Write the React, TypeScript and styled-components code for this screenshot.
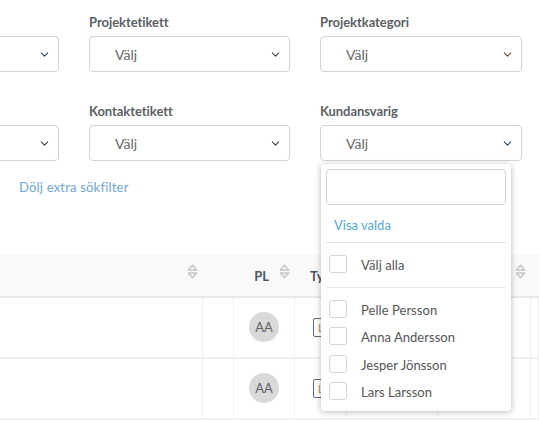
import React from 'react';
import styled, { createGlobalStyle } from 'styled-components';
import { LuChevronDown } from 'react-icons/lu';

const GlobalStyle = createGlobalStyle`
    html, body {
        margin: 0;
        padding: 0;
        background: #fff;
    }
    * {
        box-sizing: border-box;
    }
`;

const people = ['Pelle Persson', 'Anna Andersson', 'Jesper Jönsson', 'Lars Larsson'];

const filterRows = [
    [
        { label: '', chevron: '#1f3f66', hidden: true },
        { label: 'Projektetikett', chevron: '#3a3a3a' },
        { label: 'Projektkategori', chevron: '#5a4030' }
    ],
    [
        { label: '', chevron: '#3a3a3a', hidden: true },
        { label: 'Kontaktetikett', chevron: '#3a3a3a' },
        { label: 'Kundansvarig', chevron: '#1f3f66', open: true }
    ]
];

const SortIcon: React.FC = () => (
    <SortSvg width="11" height="15" viewBox="0 0 11 15">
        <path d="M5.5 1.2 L9.6 6 H1.4 Z" fill="none" stroke="#c6c6c6" strokeWidth="1.4" strokeLinejoin="round" />
        <path d="M5.5 13.8 L9.6 9 H1.4 Z" fill="none" stroke="#c6c6c6" strokeWidth="1.4" strokeLinejoin="round" />
    </SortSvg>
);

const App: React.FC = () => {
    return (
        <Page>
            <GlobalStyle />
            <FilterGrid>
                {filterRows.flat().map((field, i) => (
                    <Field key={i}>
                        <FieldLabel>{field.label}</FieldLabel>
                        <SelectBox>
                            {!field.hidden && <SelectText>Välj</SelectText>}
                            <Chevron size={13} color={field.chevron} strokeWidth={1.9} />
                        </SelectBox>
                        {field.open && (
                            <Dropdown>
                                <SearchInput />
                                <ShowSelected>Visa valda</ShowSelected>
                                <SelectAllRow>
                                    <CheckBox />
                                    <OptionText>Välj alla</OptionText>
                                </SelectAllRow>
                                <OptionList>
                                    {people.map((name) => (
                                        <OptionRow key={name}>
                                            <CheckBox />
                                            <OptionText>{name}</OptionText>
                                        </OptionRow>
                                    ))}
                                </OptionList>
                            </Dropdown>
                        )}
                    </Field>
                ))}
            </FilterGrid>

            <ToggleLink>Dölj extra sökfilter</ToggleLink>

            <TableHead>
                <HeadCell>
                    <SortIcon />
                </HeadCell>
                <HeadCell />
                <HeadCell>
                    <HeadText>PL</HeadText>
                    <SortIcon />
                </HeadCell>
                <HeadCell $start>
                    <HeadText>Typ</HeadText>
                </HeadCell>
                <HeadCell />
                <HeadCell>
                    <SortIcon />
                </HeadCell>
                <HeadCell />
            </TableHead>

            {[0, 1].map((row) => (
                <TableRow key={row}>
                    <Cell />
                    <Cell />
                    <Cell>
                        <Avatar>AA</Avatar>
                    </Cell>
                    <TypeCell>
                        <TypeTag>L</TypeTag>
                    </TypeCell>
                    <Cell />
                    <Cell>
                        {/* mostly covered by the open dropdown, only the edge shows */}
                        <RowAction />
                    </Cell>
                    <Cell />
                </TableRow>
            ))}
        </Page>
    );
};

const Page = styled.div`
    position: relative;
    width: 539px;
    height: 422px;
    overflow: hidden;
    background: #fff;
    font-family: 'Lato', 'Liberation Sans', sans-serif;
    color: #555;
`;

const FilterGrid = styled.div`
    display: grid;
    grid-template-columns: 201px 201px 202px;
    column-gap: 30px;
    row-gap: 32px;
    margin-left: -142px;
    padding-top: 15px;
`;

const Field = styled.div`
    position: relative;
`;

const FieldLabel = styled.div`
    height: 21px;
    font-size: 13px;
    line-height: 15px;
    font-weight: 700;
    letter-spacing: -0.05px;
    color: #5a5f66;
`;

const SelectBox = styled.div`
    display: flex;
    align-items: center;
    height: 36px;
    padding: 0 7px 0 25px;
    border: 1px solid #cfd4dc;
    border-radius: 4px;
    background: #fff;
`;

const Chevron = styled(LuChevronDown)`
    margin-left: auto;
`;

const SelectText = styled.span`
    font-size: 14px;
    color: #666;
`;

const Dropdown = styled.div`
    position: absolute;
    top: 60px;
    left: 1px;
    width: 190px;
    height: 247px;
    padding: 5px 5px 0;
    background: #fff;
    border-radius: 3px;
    box-shadow: 0 1px 6px rgba(0, 0, 0, 0.28);
    z-index: 2;
`;

const SearchInput = styled.div`
    width: 180px;
    height: 36px;
    border: 1px solid #cfd4dc;
    border-radius: 4px;
`;

const ShowSelected = styled.div`
    height: 38px;
    padding: 13px 0 0 8px;
    font-size: 13px;
    line-height: 15px;
    color: #52a8e0;
    border-bottom: 1px solid #dfe2e8;
`;

const SelectAllRow = styled.div`
    display: flex;
    align-items: center;
    height: 45px;
    padding: 0 0 2px 3px;
    border-bottom: 1px solid #e6e8ec;
`;

const OptionList = styled.div`
    display: flex;
    flex-direction: column;
    gap: 9.33px;
    padding: 12px 0 0 3px;
`;

const OptionRow = styled.div`
    display: flex;
    align-items: center;
    height: 18px;
`;

const CheckBox = styled.span`
    flex: none;
    width: 18px;
    height: 18px;
    margin-right: 14px;
    border: 1px solid #d2d5da;
    border-radius: 3px;
    background: #fff;
`;

const OptionText = styled.span`
    padding-top: 2px;
    font-size: 13px;
    letter-spacing: 0.05px;
    color: #555;
`;

const ToggleLink = styled.div`
    height: 93px;
    padding: 19px 0 0 19px;
    font-size: 13px;
    line-height: 15px;
    letter-spacing: 0.2px;
    color: #6ea6e0;
`;

const columns = '203px 31px 61px 52px 91px 93px 8px';

const TableHead = styled.div`
    display: grid;
    grid-template-columns: ${columns};
    height: 44px;
    background: #f9f9f9;
    border-bottom: 2px solid #e8e8e8;
`;

const HeadCell = styled.div<{ $start?: boolean }>`
    display: flex;
    align-items: flex-start;
    justify-content: ${({ $start }) => ($start ? 'flex-start' : 'flex-end')};
    gap: 10px;
    padding: 10px 5px 0 ${({ $start }) => ($start ? '15px' : '0')};
    font-size: 13px;
    font-weight: 700;
    color: #4c5560;
`;

const HeadText = styled.span`
    padding-top: 5px;
    line-height: 15px;
`;

const SortSvg = styled.svg`
    flex: none;
`;

const TableRow = styled.div`
    display: grid;
    grid-template-columns: ${columns};
    height: 61px;
    border-bottom: 2px solid #f0f0f0;
`;

const Cell = styled.div`
    display: flex;
    align-items: center;
    justify-content: center;
    border-right: 1px solid #f0f0f0;
`;

const TypeCell = styled(Cell)`
    justify-content: flex-start;
    padding-left: 18px;
`;

const RowAction = styled.span`
    width: 8px;
    height: 10px;
    margin: -2px 0 0 45px;
    background: #cfe4f3;
`;

const Avatar = styled.div`
    display: flex;
    align-items: center;
    justify-content: center;
    width: 30px;
    height: 30px;
    margin-top: -1px;
    border-radius: 50%;
    background: #d9d9d9;
    font-size: 13px;
    color: #5c6268;
`;

const TypeTag = styled.div`
    width: 26px;
    height: 19px;
    padding-left: 4px;
    border: 1px solid #5f6873;
    border-radius: 2px;
    font-size: 11px;
    line-height: 17px;
    color: #c98a45;
`;

export default App;
